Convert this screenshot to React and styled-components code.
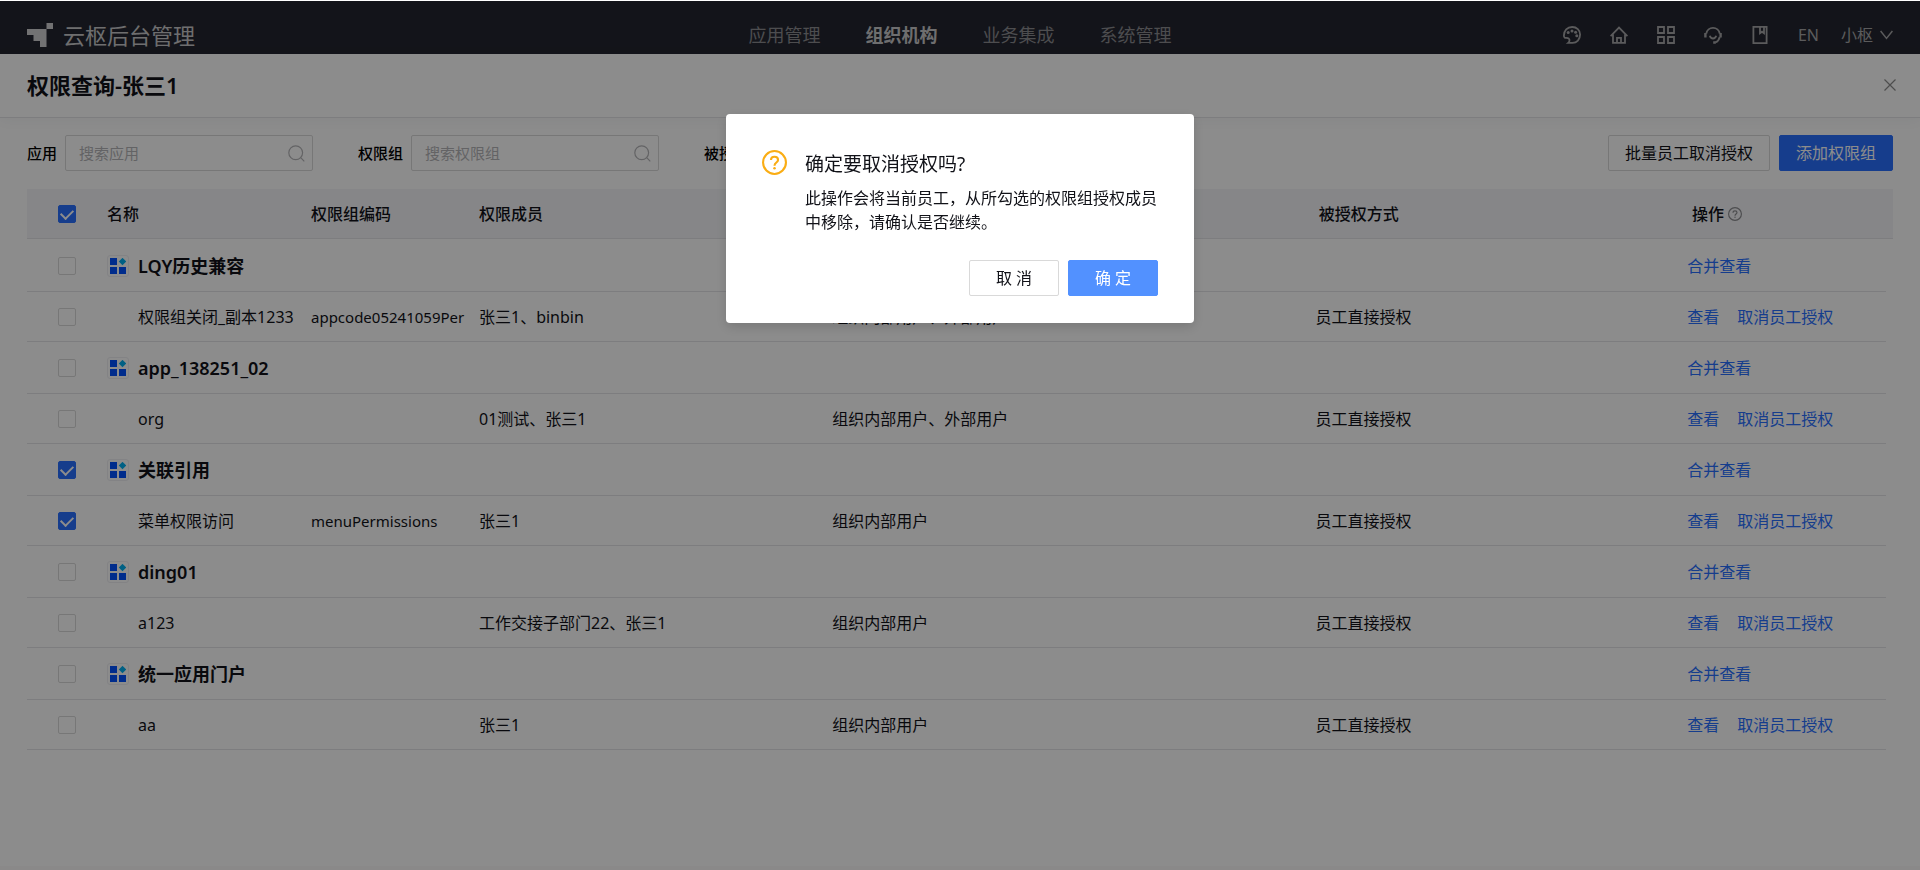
import { useState } from "react";
import styled, { createGlobalStyle, css } from "styled-components";

const colors = {
    primary: "#2970ff",
    primaryHover: "#5291ff",
    text: "#111218",
    border: "#d9d9d9",
    line: "#e4e4e8",
    headBg: "#f4f5f8",
    navBg: "#242630",
    navText: "#8c8c90",
    navIcon: "#a6a6a8",
    placeholder: "#b5b5b8",
    warning: "#faad14",
};

const GlobalStyle = createGlobalStyle`
  * {
    box-sizing: border-box;
  }

  body {
    margin: 0;
    background: #fff;
    color: ${colors.text};
    font-family: "Noto Sans", "Noto Sans CJK SC", sans-serif;
    font-size: 16px;
    line-height: 24px;
  }

  button, input {
    font-family: inherit;
  }
`;

const Page = styled.div`
  min-height: 100vh;
  padding-top: 1px;
  display: flex;
  flex-direction: column;
`;

const Header = styled.header`
  display: grid;
  grid-template-columns: 1fr auto 1fr;
  align-items: center;
  height: 53px;
  padding: 14px 27px 0;
  background: ${colors.navBg};
`;

const Brand = styled.div`
  display: flex;
  align-items: center;
  gap: 10px;
  color: #c8c8ca;
  font-size: 22px;

  svg {
    fill: #d0d0d2;
  }
`;

const Nav = styled.nav`
  display: flex;
  gap: 45px;
`;

const NavLink = styled.a`
  color: ${({ $active }) => ($active ? "#c8c8ca" : colors.navText)};
  font-size: 18px;
  font-weight: ${({ $active }) => ($active ? 700 : 400)};
  text-decoration: none;
`;

const Tools = styled.div`
  display: flex;
  align-items: center;
  justify-content: flex-end;
  gap: 22px;
`;

const ToolIcons = styled.div`
  display: flex;
  align-items: center;
  gap: 29px;
`;

const ToolButton = styled.button`
  display: flex;
  align-items: center;
  gap: 7px;
  padding: 0;
  border: 0;
  background: none;
  color: ${colors.navIcon};
  font-size: 16px;
  line-height: 24px;
  cursor: pointer;

  svg {
    fill: none;
    stroke: currentColor;
  }
`;

const TitleBar = styled.div`
  display: flex;
  align-items: center;
  justify-content: space-between;
  height: 64px;
  padding: 0 22px 2px 27px;
  border-bottom: 1px solid ${colors.line};
  box-shadow: 0 2px 12px rgba(31, 56, 88, 0.05);
`;

const Title = styled.h1`
  margin: 0;
  font-size: 22px;
  font-weight: 600;
  line-height: 32px;
`;

const IconButton = styled.button`
  display: flex;
  padding: 2px;
  border: 0;
  background: none;
  color: #8c8c8c;
  cursor: pointer;
`;

const Content = styled.main`
  flex: 1;
  padding: 17px 27px;
  border-bottom: 4px solid #fbf9fa;
`;

const Toolbar = styled.div`
  display: flex;
  justify-content: space-between;
  margin-bottom: 18px;
`;

const Filters = styled.div`
  display: flex;
  gap: 45px;
`;

const Field = styled.div`
  display: flex;
  align-items: center;
  gap: 8px;
`;

const FieldLabel = styled.label`
  color: #000;
  font-size: 15px;
  font-weight: 500;
  white-space: nowrap;
`;

const SearchBox = styled.div`
  display: flex;
  align-items: center;
  width: 248px;
  height: 36px;
  padding: 0 7px 0 13px;
  border: 1px solid ${colors.border};
  border-radius: 2px;
  color: ${colors.placeholder};
`;

const SearchInput = styled.input`
  flex: 1;
  min-width: 0;
  padding: 0;
  border: 0;
  outline: 0;
  background: none;
  font-size: 15px;

  &::placeholder {
    color: ${colors.placeholder};
  }
`;

const Select = styled.select`
  width: 248px;
  height: 36px;
  border: 1px solid ${colors.border};
  border-radius: 2px;
  background: #fff;
`;

const Actions = styled.div`
  display: flex;
  gap: 9px;
`;

const Button = styled.button`
  height: 36px;
  min-width: 90px;
  padding: 0 16px;
  border: 1px solid ${colors.border};
  border-radius: 2px;
  background: #fff;
  color: ${colors.text};
  font-size: 16px;
  line-height: 24px;
  cursor: pointer;

  ${({ $primary }) =>
      $primary &&
      css`
        border-color: ${$primary};
        background: ${$primary};
        color: #fff;
      `}
`;

const Table = styled.table`
  width: 100%;
  table-layout: fixed;
  border-collapse: separate;
  border-spacing: 0;
`;

const TableBody = styled.div`
  padding: 1px 7px 0 0;
`;

const Th = styled.th`
  height: 50px;
  padding: 0 9px;
  border-bottom: 1px solid ${colors.line};
  background: ${colors.headBg};
  font-weight: 500;
  text-align: left;

  &:first-child {
    padding-left: 31px;
  }
`;

const Td = styled.td`
  height: ${({ $group }) => ($group ? 52 : 50)}px;
  padding: 0 9px;
  border-bottom: 1px solid ${colors.line};
  font-size: ${({ $code }) => ($code ? 15 : 16)}px;
  white-space: nowrap;

  &:first-child {
    padding-left: 31px;
  }
`;

const HeadLabel = styled.span`
  display: flex;
  align-items: center;
  gap: 4px;

  svg {
    color: #8c8c90;
  }
`;

const GroupName = styled.span`
  display: flex;
  align-items: center;
  gap: 9px;
  font-size: 18px;
  font-weight: 600;
`;

const AppBadge = styled.span`
  display: flex;
  align-items: center;
  justify-content: center;
  width: 22px;
  height: 22px;
  border: 1px solid #eeeef2;
  border-radius: 3px;
`;

const LeafName = styled.span`
  padding-left: 31px;
`;

const Links = styled.span`
  display: flex;
  gap: 18px;
`;

const TextLink = styled.a`
  color: ${colors.primary};
  text-decoration: none;
`;

const Check = styled.input`
  appearance: none;
  display: grid;
  place-content: center;
  width: 18px;
  height: 18px;
  margin: 0;
  border: 1px solid ${colors.border};
  border-radius: 2px;
  background: #fff;

  &:checked {
    border-color: ${colors.primary};
    background: ${colors.primary};
  }

  &:checked::after {
    content: "";
    width: 6px;
    height: 10px;
    margin-bottom: 2px;
    border: solid #fff;
    border-width: 0 2px 2px 0;
    transform: rotate(45deg);
  }
`;

const Mask = styled.div`
  position: fixed;
  inset: 1px 0 0;
  display: flex;
  align-items: flex-start;
  justify-content: center;
  padding-top: 113px;
  background: rgba(0, 0, 0, 0.45);
`;

const Dialog = styled.section`
  width: 468px;
  padding: 36px 36px 27px;
  border-radius: 4px;
  background: #fff;
  box-shadow: 0 4px 12px rgba(0, 0, 0, 0.15);
`;

const DialogBody = styled.div`
  display: flex;
  align-items: flex-start;
  gap: 18px;

  svg {
    flex: none;
    color: ${colors.warning};
  }
`;

const DialogTitle = styled.h2`
  margin: 0 0 8px;
  font-size: 19px;
  font-weight: 400;
  line-height: 28px;
`;

const DialogText = styled.p`
  margin: 0;
`;

const DialogFooter = styled.div`
  display: flex;
  justify-content: flex-end;
  gap: 9px;
  margin-top: 26px;
`;

const Logo = () => (
    <svg width="26" height="24" viewBox="0 0 26 24">
        <path d="M19.5 0H26v6h-6.500zM0 6h19.500v18H13v-6H6.500v-6H0z"/>
    </svg>
);

const PaletteIcon = () => (
    <svg width="18" height="18" viewBox="0 0 18 18" strokeWidth="1.8">
        <path d="M.9 9.500C.9 4.600 4.300 1 9.200 1c4.500 0 7.900 3.300 7.900 7.600 0 4.900-3.300 8.300-7.600 8.300H5.200c1.500-1.300 1.700-3.200.6-4.300-1.300-1.200-3.200-.4-4.300-1.200-.5-.4-.6-1.100-.6-1.900z"/>
        <g fill="currentColor" stroke="none">
            <circle cx="5.200" cy="6.400" r="1.500"/>
            <circle cx="9" cy="4.900" r="1.500"/>
            <circle cx="12.600" cy="6.300" r="1.500"/>
            <circle cx="13.800" cy="9.800" r="1.500"/>
        </g>
    </svg>
);

const HomeIcon = () => (
    <svg width="18" height="18" viewBox="0 0 18 18" strokeWidth="1.8">
        <path d="M.6 10.200 9 1.600l8.400 8.600M3 8.500v8.400h12V8.500M7 16.900v-5h4v5"/>
    </svg>
);

const GridIcon = () => (
    <svg width="18" height="18" viewBox="0 0 18 18" strokeWidth="1.8">
        <path d="M1 1h6v6H1zM11 1h6v6h-6zM1 11h6v6H1zM11 11h6v6h-6z"/>
    </svg>
);

const ServiceIcon = () => (
    <svg width="18" height="18" viewBox="0 0 18 18" strokeWidth="1.8">
        <path d="M2.300 7.600a6.800 6.800 0 0 1 13.400 0M5.800 9.800c.5 1.700 1.700 2.700 3.200 2.700s2.700-1 3.200-2.700M15.700 11c-.5 2.700-2 4.600-4.400 5.500"/>
        <path d="M1.400 7v4.500M16.600 7v4.500M9.200 16.500h2.600" strokeWidth="2.400"/>
    </svg>
);

const BookIcon = () => (
    <svg width="18" height="18" viewBox="0 0 18 18" strokeWidth="1.8">
        <path d="M2.400.9h13.200v16.200H2.400zM9 .9v6.300l2-1.500 2 1.500V.9"/>
    </svg>
);

const ChevronIcon = () => (
    <svg width="13" height="10" viewBox="0 0 13 10" strokeWidth="1.5">
        <path d="m.6 1 5.900 7.400L12.400 1"/>
    </svg>
);

const SearchIcon = () => (
    <svg width="17" height="17" viewBox="0 0 17 17" fill="none" stroke="currentColor" strokeWidth="1.2">
        <circle cx="7.700" cy="7.700" r="6.900"/>
        <path d="m12.700 12.700 3.600 3.600"/>
    </svg>
);

const CloseIcon = () => (
    <svg width="12" height="12" viewBox="0 0 12 12" stroke="currentColor" strokeWidth="1.2">
        <path d="m.5.500 11 11m0-11-11 11"/>
    </svg>
);

const QuestionIcon = ({ size }) => (
    <svg width={size} height={size} viewBox="0 0 24 24" fill="none" stroke="currentColor" strokeWidth="2">
        <circle cx="12" cy="12" r="11"/>
        <path d="M8.600 9.700c0-2 1.500-3.200 3.400-3.200s3.400 1.200 3.400 3c0 2.600-3.400 2.500-3.400 5.500"/>
        <circle cx="12" cy="17.500" r="1.200" fill="currentColor" stroke="none"/>
    </svg>
);

const AppIcon = () => (
    <svg width="16" height="16" viewBox="0 0 16 16" fill="#0050ff">
        <path d="M0 0h7v7H0zM0 9h7v7H0zM9 9h7v7H9z"/>
        <path d="m12.500-.2 3.700 3.700-3.700 3.700-3.700-3.700z" fill="#00b0f0"/>
    </svg>
);

const navItems = ["应用管理", "组织机构", "业务集成", "系统管理"];

const tools = [
    { label: "主题", Icon: PaletteIcon },
    { label: "首页", Icon: HomeIcon },
    { label: "应用", Icon: GridIcon },
    { label: "客服", Icon: ServiceIcon },
    { label: "文档", Icon: BookIcon },
];

const initialRows = [
    { id: 1, group: true, name: "LQY历史兼容" },
    { id: 2, name: "权限组关闭_副本1233", code: "appcode05241059Per", members: "张三1、binbin", scope: "组织内部用户、外部用户" },
    { id: 3, group: true, name: "app_138251_02" },
    { id: 4, name: "org", members: "01测试、张三1", scope: "组织内部用户、外部用户" },
    { id: 5, group: true, name: "关联引用", checked: true },
    { id: 6, name: "菜单权限访问", code: "menuPermissions", members: "张三1", scope: "组织内部用户", checked: true },
    { id: 7, group: true, name: "ding01" },
    { id: 8, name: "a123", members: "工作交接子部门22、张三1", scope: "组织内部用户" },
    { id: 9, group: true, name: "统一应用门户" },
    { id: 10, name: "aa", members: "张三1", scope: "组织内部用户" },
];

const Columns = () => (
    <colgroup>
        <col width="71"/>
        <col width="204"/>
        <col width="168"/>
        <col width="19%"/>
        <col width="26%"/>
        <col width="20%"/>
        <col/>
    </colgroup>
);

const Row = ({ row, onToggle }) => (
    <tr>
        <Td $group={row.group}>
            <Check type="checkbox" aria-label={row.name} checked={!!row.checked} onChange={() => onToggle(row.id)}/>
        </Td>
        <Td>
            {row.group ? (
                <GroupName><AppBadge><AppIcon/></AppBadge>{row.name}</GroupName>
            ) : (
                <LeafName>{row.name}</LeafName>
            )}
        </Td>
        <Td $code>{row.code}</Td>
        <Td>{row.members}</Td>
        <Td>{row.scope}</Td>
        <Td>{!row.group && "员工直接授权"}</Td>
        <Td>
            {row.group ? (
                <TextLink href="#">合并查看</TextLink>
            ) : (
                <Links>
                    <TextLink href="#">查看</TextLink>
                    <TextLink href="#">取消员工授权</TextLink>
                </Links>
            )}
        </Td>
    </tr>
);

const ConfirmDialog = ({ onClose }) => (
    <Mask>
        <Dialog role="dialog" aria-modal="true" aria-labelledby="confirm-title">
            <DialogBody>
                <QuestionIcon size={25}/>
                <div>
                    <DialogTitle id="confirm-title">确定要取消授权吗?</DialogTitle>
                    <DialogText>此操作会将当前员工，从所勾选的权限组授权成员中移除，请确认是否继续。</DialogText>
                </div>
            </DialogBody>
            <DialogFooter>
                <Button type="button" onClick={onClose}>取 消</Button>
                <Button type="button" $primary={colors.primaryHover} onClick={onClose}>确 定</Button>
            </DialogFooter>
        </Dialog>
    </Mask>
);

const App = () => {
    const [rows, setRows] = useState(initialRows);
    const [allChecked, setAllChecked] = useState(true);
    const [open, setOpen] = useState(true);

    const toggle = (id) =>
        setRows(rows.map((row) => (row.id === id ? { ...row, checked: !row.checked } : row)));

    return (
        <Page>
            <GlobalStyle/>
            <Header>
                <Brand><Logo/>云枢后台管理</Brand>
                <Nav>
                    {navItems.map((item) => (
                        <NavLink key={item} href="#" $active={item === "组织机构"}>{item}</NavLink>
                    ))}
                </Nav>
                <Tools>
                    <ToolIcons>
                        {tools.map(({ label, Icon }) => (
                            <ToolButton key={label} type="button" aria-label={label}><Icon/></ToolButton>
                        ))}
                        <ToolButton type="button">EN</ToolButton>
                    </ToolIcons>
                    <ToolButton type="button">小枢<ChevronIcon/></ToolButton>
                </Tools>
            </Header>
            <TitleBar>
                <Title>权限查询-张三1</Title>
                <IconButton type="button" aria-label="关闭"><CloseIcon/></IconButton>
            </TitleBar>
            <Content>
                <Toolbar>
                    <Filters>
                        <Field>
                            <FieldLabel htmlFor="app">应用</FieldLabel>
                            <SearchBox><SearchInput id="app" placeholder="搜索应用"/><SearchIcon/></SearchBox>
                        </Field>
                        <Field>
                            <FieldLabel htmlFor="group">权限组</FieldLabel>
                            <SearchBox><SearchInput id="group" placeholder="搜索权限组"/><SearchIcon/></SearchBox>
                        </Field>
                        <Field>
                            <FieldLabel htmlFor="way">被授权方式</FieldLabel>
                            <Select id="way"/>
                        </Field>
                    </Filters>
                    <Actions>
                        <Button type="button" onClick={() => setOpen(true)}>批量员工取消授权</Button>
                        <Button type="button" $primary={colors.primary}>添加权限组</Button>
                    </Actions>
                </Toolbar>
                <Table>
                    <Columns/>
                    <thead>
                        <tr>
                            <Th>
                                <Check type="checkbox" aria-label="全选" checked={allChecked} onChange={() => setAllChecked(!allChecked)}/>
                            </Th>
                            <Th>名称</Th>
                            <Th>权限组编码</Th>
                            <Th>权限成员</Th>
                            <Th/>
                            <Th>被授权方式</Th>
                            <Th><HeadLabel>操作<QuestionIcon size={14}/></HeadLabel></Th>
                        </tr>
                    </thead>
                </Table>
                <TableBody>
                    <Table>
                        <Columns/>
                        <tbody>
                            {rows.map((row) => <Row key={row.id} row={row} onToggle={toggle}/>)}
                        </tbody>
                    </Table>
                </TableBody>
            </Content>
            {open && <ConfirmDialog onClose={() => setOpen(false)}/>}
        </Page>
    );
};

export default App;
